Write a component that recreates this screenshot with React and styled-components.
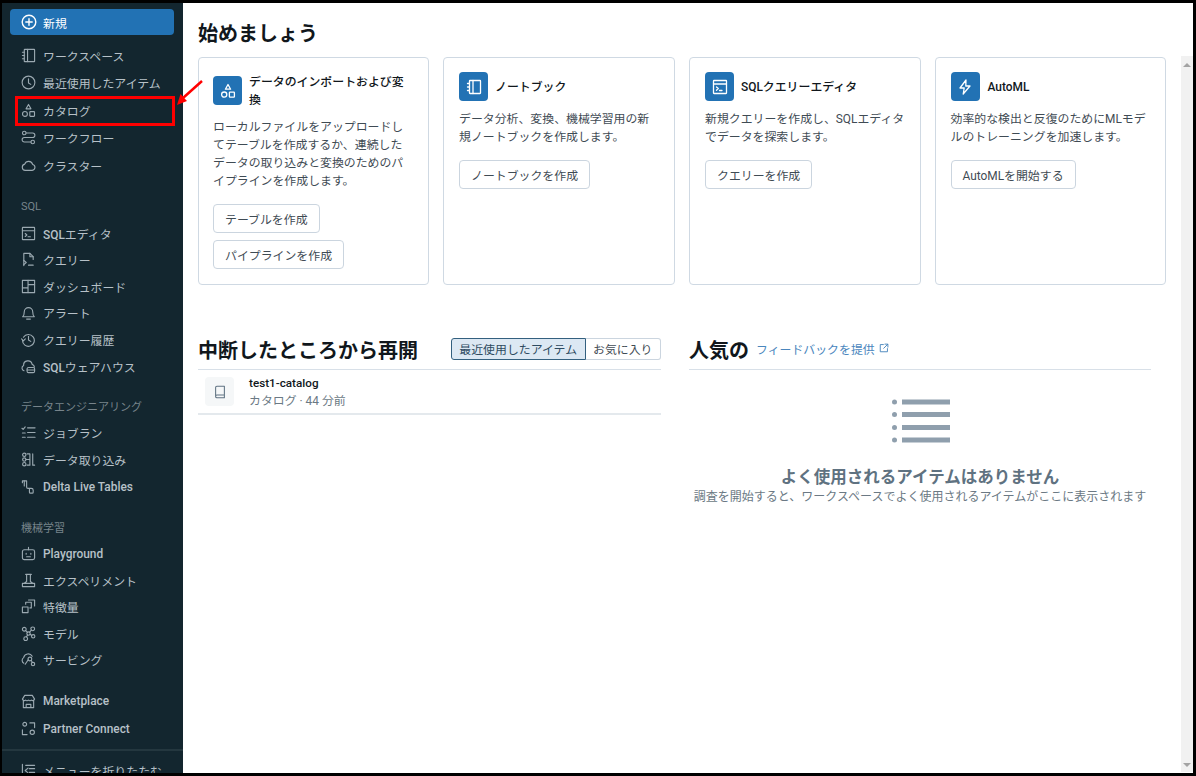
import React from "react";
import styled, { createGlobalStyle } from "styled-components";

const FONT = `Roboto, "Noto Sans CJK JP", sans-serif`;

const GlobalStyle = createGlobalStyle`
  html, body {
    margin: 0;
    padding: 0;
    background: #000;
    font-family: ${FONT};
    overflow: hidden;
  }
  * { box-sizing: border-box; }
`;

// Icons, drawn on a 16 unit grid
const Icon = ({ size = 15, width = 1.2, children }) => (
  <svg
    width={size}
    height={size}
    viewBox="0 0 16 16"
    fill="none"
    stroke="currentColor"
    strokeWidth={width}
    strokeLinecap="round"
    strokeLinejoin="round"
  >
    {children}
  </svg>
);

const icons = {
  notebook: (
    <>
      <rect x="3.5" y="1.5" width="11" height="13" rx="0.5" />
      <path d="M7 1.5v13M1.5 4.5h2M1.5 8h2M1.5 11.5h2" />
    </>
  ),
  clock: (
    <>
      <circle cx="8" cy="8" r="6.8" />
      <path d="M8 4v4.5l2.4 1.5" />
    </>
  ),
  catalog: (
    <>
      <path d="M8 1.5l2.6 4.7H5.4z" />
      <circle cx="4.2" cy="11.6" r="2.6" />
      <rect x="9.4" y="9.2" width="5" height="5" rx="0.6" />
    </>
  ),
  workflow: (
    <>
      <circle cx="3.5" cy="3.2" r="1.9" />
      <circle cx="12.5" cy="12.8" r="1.9" />
      <path d="M5.4 3.2h7a2.4 2.4 0 0 1 0 4.8H3.6a2.4 2.4 0 0 0 0 4.8h7" />
    </>
  ),
  cloud: <path d="M4.5 13.2a3.4 3.4 0 0 1-.5-6.7 4.4 4.4 0 0 1 8.4.4 3.2 3.2 0 0 1-.4 6.3z" />,
  editor: (
    <>
      <rect x="1.5" y="1.5" width="13" height="13" rx="0.5" />
      <path d="M1.5 5h13M4.5 8l1.8 1.6-1.8 1.6M7.5 11.5h2.5" />
    </>
  ),
  query: (
    <>
      <path d="M3 14.5V1.5h6.5l3.5 3.5v3" />
      <path d="M9.5 1.5V5H13M3 9l2.6 2.2L3 13.4M8 14h5" />
    </>
  ),
  dashboard: (
    <>
      <rect x="1.5" y="1.5" width="13" height="13" />
      <path d="M7.5 1.5v13M7.5 6h7M1.5 9.5h6" />
    </>
  ),
  bell: (
    <>
      <path d="M1.8 12.5c1.2-1 1.7-2.5 1.7-5.2a4.5 4.5 0 0 1 9 0c0 2.7.5 4.2 1.7 5.2z" />
      <path d="M6 15h4" />
    </>
  ),
  history: (
    <>
      <path d="M2.6 5.6a6.3 6.3 0 1 1-1 3.2" />
      <path d="M.6 7.4l2 2 2-2M8 4.5v4l2.4 1.5" />
    </>
  ),
  warehouse: (
    <>
      <path d="M3.2 12.5a3 3 0 0 1-.4-5.6 4.6 4.6 0 0 1 9.1-1.2 3.3 3.3 0 0 1 2.4 2.9" />
      <rect x="6.5" y="9" width="8" height="5.5" rx="1.5" />
      <path d="M6.5 11.7h8" />
    </>
  ),
  jobs: <path d="M7 3h8M7 8h8M7 13h8M1 3.5l1.3 1.2L4.5 2M1.5 8.5h3M1.5 13h3" />,
  ingest: (
    <>
      <circle cx="3.5" cy="3" r="1.8" />
      <circle cx="3.5" cy="8" r="1.8" />
      <circle cx="3.5" cy="13" r="1.8" />
      <path d="M5.3 8H9M6.5 2h3v12h-3M12.5 2v12h2" />
    </>
  ),
  delta: (
    <>
      <path d="M1.5 4V2H6v6.5c0 1 .5 1.5 1.5 1.5H11c1 0 2 .5 2 2v2a1 1 0 0 1-1 1h-2a1 1 0 0 1-1-1v-3" />
      <path d="M3.5 2v5.5" />
    </>
  ),
  robot: (
    <>
      <rect x="1.5" y="4" width="13" height="10.5" rx="2" />
      <path d="M8 4V1.5M5.5 7.8v1M10.5 7.8v1M6 11.5h4" />
    </>
  ),
  flask: <path d="M5 1.5h6M6 1.5V9M10 1.5V9M1.5 11h13v3.5h-13zM6 9l-2.5 2M10 9l2.5 2" />,
  features: (
    <>
      <rect x="1.5" y="8.5" width="6" height="6" />
      <path d="M5 5.5v-2h6v6H9.5M8 1h6.5v6.5" />
    </>
  ),
  model: (
    <>
      <circle cx="3.5" cy="3.5" r="2" />
      <circle cx="12.5" cy="3" r="2" />
      <circle cx="8" cy="8" r="1.8" />
      <circle cx="13" cy="11" r="1.8" />
      <circle cx="5" cy="13.5" r="2" />
      <path d="M5 5l2 1.8M11 4.5L9.2 6.5M9.7 8.800l1.700 1.300M7 9.700l-1.300 2" />
    </>
  ),
  serving: (
    <>
      <path d="M3 12a3.5 3.5 0 0 1-.2-6 5 5 0 0 1 9.200-1.500" />
      <circle cx="9.5" cy="7.5" r="2" />
      <circle cx="12.8" cy="12.8" r="1.8" />
      <path d="M11 9l1 2M7.5 8.500L4.500 13" />
    </>
  ),
  market: (
    <path d="M2.5 6.5v8h11v-8M4 1.5h8l2.5 4a2 2 0 0 1-3.3 1 2.2 2.2 0 0 1-3.2 0 2.2 2.2 0 0 1-3.2 0 2 2 0 0 1-3.3-1zM5.5 14.5V11h5v3.5" />
  ),
  partner: (
    <>
      <circle cx="4" cy="3.5" r="2" />
      <circle cx="12" cy="12" r="2.3" />
      <path d="M9.5 2h5v5M1.5 9.5v5h5" />
    </>
  ),
  collapse: <path d="M1.5 1.5v13M5 2.5h9.5M5 13.5h9.5M9 6h5.500M9 10h5.500M7.500 5.500L4.500 8l3 2.500" />,
  plus: (
    <>
      <circle cx="8" cy="8" r="6.8" />
      <path d="M8 4.8v6.4M4.8 8h6.4" />
    </>
  ),
  bolt: <path d="M9 1L3 9h4.200l-1 6L13 7H8.800z" />,
  book: <path d="M3 13V3a1.5 1.5 0 0 1 1.5-1.5H13v10H4.500A1.500 1.500 0 0 0 3 13a1.500 1.500 0 0 0 1.500 1.500H13v-3" />,
  external: (
    <>
      <path d="M7 2.5H2V14h11.5V9" />
      <path d="M9.5 1.8h4.7v4.7M14 2L7.5 8.5" />
    </>
  ),
};

// Latin runs are heavier than the kana beside them in the reference
const Lat = styled.span`
  font-weight: 500;
`;

const Frame = styled.div`
  width: 1196px;
  height: 776px;
  padding: 3px 3px 3px 2px;
  background: #000;
  display: flex;
  position: relative;
  overflow: hidden;
`;

const Sidebar = styled.nav`
  width: 181px;
  flex: none;
  height: 100%;
  background: #13262f;
  padding: 6px 9px 0 8px;
  display: flex;
  flex-direction: column;
  overflow: hidden;
`;

const NewButton = styled.div`
  height: 26px;
  background: #2272b4;
  border-radius: 4px;
  color: #fff;
  font-size: 11.9px;
  display: flex;
  align-items: center;
  gap: 6px;
  padding-left: 11px;
  margin-bottom: 6.25px;
  flex: none;
`;

const NavGroup = styled.div`
  display: flex;
  flex-direction: column;
  flex: none;
  margin-bottom: ${(p) => p.$gap ?? 18}px;
`;

const NavLabel = styled.div`
  height: 22px;
  padding: 0 0 4px 11px;
  display: flex;
  align-items: center;
  color: #77848b;
  font-size: 11px;
`;

const NavItem = styled.div`
  height: ${(p) => p.$pitch ?? 26.6}px;
  flex: none;
  display: flex;
  align-items: center;
  gap: 7px;
  padding-left: 11px;
  color: #b7c1c8;
  font-size: 11.9px;
  white-space: nowrap;
  svg {
    flex: none;
    color: #9ba9b1;
  }
`;

const NavDivider = styled.div`
  height: 2px;
  background: #24373f;
  margin: 6px -9px 6.5px -8px;
  flex: none;
`;

const Main = styled.main`
  flex: 1;
  background: #fff;
  padding: 18px 0 0 15px;
  min-width: 0;
`;

const Scrollbar = styled.div`
  width: 12px;
  flex: none;
  margin: 53px 0 1px;
  background: #f1f1f1;
  display: flex;
  flex-direction: column;
  justify-content: space-between;
  align-items: center;
  padding: 7px 0 5px;
`;

const ScrollbarWrap = styled.div`
  background: #fff;
  display: flex;
`;

const Arrow = styled.div`
  width: 0;
  height: 0;
  border-left: 4px solid transparent;
  border-right: 4px solid transparent;
  ${(p) => (p.$down ? "border-top: 4px solid #a3a3a3;" : "border-bottom: 4px solid #a3a3a3;")}
`;

const Heading = styled.h2`
  margin: 0;
  font-size: 20px;
  line-height: 27px;
  font-weight: 600;
  color: #11171c;
  white-space: nowrap;
`;

const CardRow = styled.div`
  display: grid;
  grid-template-columns: 231px 232px 231.5px 231px;
  gap: 14px;
  margin-top: 9px;
  width: 968px;
`;

const Card = styled.div`
  height: 228px;
  border: 1px solid #cfd9e3;
  border-radius: 4px;
  padding: 14px;
  &:not(:first-child) {
    padding-left: 15px;
  }
`;

const CardHead = styled.div`
  display: flex;
  align-items: center;
  gap: ${(p) => p.$gap ?? 7}px;
  margin-bottom: 8px;
`;

const CardIcon = styled.div`
  width: 29px;
  height: 29px;
  flex: none;
  background: #2272b4;
  border-radius: 4px;
  color: #fff;
  display: flex;
  align-items: center;
  justify-content: center;
`;

const CardTitle = styled.div`
  padding-top: 1px;
  font-size: 11.9px;
  line-height: 18px;
  font-weight: 500;
  color: #11171c;
`;

const CardText = styled.p`
  margin: 0 0 14px;
  padding-top: 1px;
  font-size: 11.9px;
  line-height: 18px;
  color: #3f4b54;
`;

const Buttons = styled.div`
  display: flex;
  flex-direction: column;
  align-items: flex-start;
  gap: 7px;
`;

const OutlineButton = styled.div`
  height: 29px;
  padding: 0 11px;
  display: flex;
  align-items: center;
  border: 1px solid #cbd5df;
  border-radius: 4px;
  font-size: 11.9px;
  color: #3f4b54;
  white-space: nowrap;
`;

const Columns = styled.div`
  display: grid;
  grid-template-columns: 463px 462px;
  gap: 28px;
  margin-top: 54px;
`;

const SectionHead = styled.div`
  height: 31px;
  display: flex;
  align-items: center;
  justify-content: ${(p) => (p.$spread ? "space-between" : "flex-start")};
  gap: 7px;
  border-bottom: 1px solid #d8e0e8;
  padding-bottom: 6px;
`;

const Toggle = styled.div`
  display: flex;
  height: 22px;
  margin-bottom: 5px;
`;

const ToggleItem = styled.div`
  display: flex;
  align-items: center;
  padding: 0 7.5px;
  font-size: 11.9px;
  white-space: nowrap;
  border-radius: ${(p) => (p.$on ? "3px 0 0 3px" : "0 3px 3px 0")};
  border: 1px solid ${(p) => (p.$on ? "#33607f" : "#cbd5df")};
  border-left-width: ${(p) => (p.$on ? 1 : 0)}px;
  background: ${(p) => (p.$on ? "#dce8f3" : "#fff")};
  color: ${(p) => (p.$on ? "#2d4a60" : "#3f4b54")};
`;

const RecentRow = styled.div`
  display: flex;
  align-items: center;
  gap: 15px;
  height: 45px;
  padding: 0 7px;
  border-bottom: 2px solid #e4e9ed;
`;

const RecentIcon = styled.div`
  width: 29px;
  height: 29px;
  background: #f5f7f8;
  border-radius: 4px;
  color: #5f7281;
  display: flex;
  align-items: center;
  justify-content: center;
`;

const RecentName = styled.div`
  font-size: 11.7px;
  line-height: 18px;
  color: #11171c;
  font-weight: 500;
`;

const RecentMeta = styled.div`
  font-size: 11.9px;
  line-height: 18px;
  color: #6b7984;
`;

const FeedbackLink = styled.div`
  display: flex;
  align-items: center;
  gap: 4px;
  color: #4a86bd;
  font-size: 11.9px;
  white-space: nowrap;
  margin-bottom: 6px;
`;

const Empty = styled.div`
  display: flex;
  flex-direction: column;
  align-items: center;
  padding-top: 29px;
`;

const ListArt = styled.svg`
  display: block;
  margin: 0 0 22px 2px;
`;

const EmptyTitle = styled.div`
  font-size: 16.5px;
  line-height: 21px;
  font-weight: 600;
  color: #5f7281;
`;

const EmptyText = styled.div`
  font-size: 12px;
  line-height: 18px;
  color: #6b7984;
  white-space: nowrap;
`;

// red annotation laid over the screenshot
const HighlightBox = styled.div`
  position: absolute;
  left: 15px;
  top: 96px;
  width: 160px;
  height: 30px;
  border: 3px solid #f00;
  pointer-events: none;
`;

const Pointer = styled.svg`
  position: absolute;
  left: 174px;
  top: 76px;
`;

const nav = [
  {
    pitch: 27.5,
    gap: 19,
    items: [
      ["notebook", "ワークスペース"],
      ["clock", "最近使用したアイテム"],
      ["catalog", "カタログ"],
      ["workflow", "ワークフロー"],
      ["cloud", "クラスター"],
    ],
  },
  {
    label: "SQL",
    items: [
      ["editor", <><Lat>SQL</Lat>エディタ</>],
      ["query", "クエリー"],
      ["dashboard", "ダッシュボード"],
      ["bell", "アラート"],
      ["history", "クエリー履歴"],
      ["warehouse", <><Lat>SQL</Lat>ウェアハウス</>],
    ],
  },
  {
    label: "データエンジニアリング",
    pitch: 27,
    items: [
      ["jobs", "ジョブラン"],
      ["ingest", "データ取り込み"],
      ["delta", <Lat>Delta Live Tables</Lat>],
    ],
  },
  {
    label: "機械学習",
    gap: 14.2,
    items: [
      ["robot", <Lat>Playground</Lat>],
      ["flask", "エクスペリメント"],
      ["features", "特徴量"],
      ["model", "モデル"],
      ["serving", "サービング"],
    ],
  },
  {
    gap: 0,
    pitch: 27.6,
    items: [
      ["market", <Lat>Marketplace</Lat>],
      ["partner", <Lat>Partner Connect</Lat>],
    ],
  },
];

const cards = [
  {
    icon: "catalog",
    title: "データのインポートおよび変換",
    text: "ローカルファイルをアップロードしてテーブルを作成するか、連続したデータの取り込みと変換のためのパイプラインを作成します。",
    buttons: ["テーブルを作成", "パイプラインを作成"],
  },
  {
    icon: "notebook",
    gap: 7,
    title: "ノートブック",
    text: "データ分析、変換、機械学習用の新規ノートブックを作成します。",
    buttons: ["ノートブックを作成"],
  },
  {
    icon: "editor",
    gap: 7,
    title: <><Lat>SQL</Lat>クエリーエディタ</>,
    text: "新規クエリーを作成し、SQLエディタでデータを探索します。",
    buttons: ["クエリーを作成"],
  },
  {
    icon: "bolt",
    gap: 8,
    title: "AutoML",
    text: "効率的な検出と反復のためにMLモデルのトレーニングを加速します。",
    buttons: ["AutoMLを開始する"],
  },
];

const App = () => (
  <>
    <GlobalStyle />
    <Frame>
      <Sidebar>
        <NewButton>
          <Icon size={16} width={1.4}>{icons.plus}</Icon>
          新規
        </NewButton>
        {nav.map((group, i) => (
          <NavGroup key={i} $gap={group.gap}>
            {group.label && <NavLabel>{group.label}</NavLabel>}
            {group.items.map(([icon, text], j) => (
              <NavItem key={j} $pitch={group.pitch}>
                <Icon>{icons[icon]}</Icon>
                <span>{text}</span>
              </NavItem>
            ))}
          </NavGroup>
        ))}
        <NavDivider />
        <NavItem>
          <Icon>{icons.collapse}</Icon>
          <span>メニューを折りたたむ</span>
        </NavItem>
      </Sidebar>

      <Main>
        <Heading>始めましょう</Heading>
        <CardRow>
          {cards.map((card, i) => (
            <Card key={i}>
              <CardHead $gap={card.gap}>
                <CardIcon>
                  <Icon size={16} width={1.3}>{icons[card.icon]}</Icon>
                </CardIcon>
                <CardTitle>{card.title}</CardTitle>
              </CardHead>
              <CardText>{card.text}</CardText>
              <Buttons>
                {card.buttons.map((label) => (
                  <OutlineButton key={label}>{label}</OutlineButton>
                ))}
              </Buttons>
            </Card>
          ))}
        </CardRow>

        <Columns>
          <div>
            <SectionHead $spread>
              <Heading>中断したところから再開</Heading>
              <Toggle>
                <ToggleItem $on>最近使用したアイテム</ToggleItem>
                <ToggleItem>お気に入り</ToggleItem>
              </Toggle>
            </SectionHead>
            <RecentRow>
              <RecentIcon>
                <Icon size={14}>{icons.book}</Icon>
              </RecentIcon>
              <div>
                <RecentName>test1-catalog</RecentName>
                <RecentMeta>カタログ · 44 分前</RecentMeta>
              </div>
            </RecentRow>
          </div>
          <div>
            <SectionHead>
              <Heading>人気の</Heading>
              <FeedbackLink>
                フィードバックを提供
                <Icon size={10} width={1.5}>{icons.external}</Icon>
              </FeedbackLink>
            </SectionHead>
            <Empty>
              <ListArt width="58" height="46" viewBox="0 0 58 46" fill="#8f9fad">
                <circle cx="2.5" cy="3" r="2.5" />
                <rect x="10" y="0.5" width="48" height="5" />
                <circle cx="2.5" cy="15.5" r="2.5" />
                <rect x="10" y="13" width="48" height="5" />
                <circle cx="2.5" cy="28.5" r="2.5" />
                <rect x="10" y="26" width="48" height="5" />
                <circle cx="2.5" cy="41" r="2.5" />
                <rect x="10" y="38.5" width="48" height="5" />
              </ListArt>
              <EmptyTitle>よく使用されるアイテムはありません</EmptyTitle>
              <EmptyText>調査を開始すると、ワークスペースでよく使用されるアイテムがここに表示されます</EmptyText>
            </Empty>
          </div>
        </Columns>
      </Main>

      <ScrollbarWrap>
        <Scrollbar>
          <Arrow />
          <Arrow $down />
        </Scrollbar>
      </ScrollbarWrap>

      <HighlightBox />
      <Pointer width="30" height="32" viewBox="0 0 30 32">
        <path d="M28 5L9 22" stroke="#f00" strokeWidth="2.5" />
        <path d="M3 29l3.5-11 6.5 7z" fill="#f00" />
      </Pointer>
    </Frame>
  </>
);

export default App;
